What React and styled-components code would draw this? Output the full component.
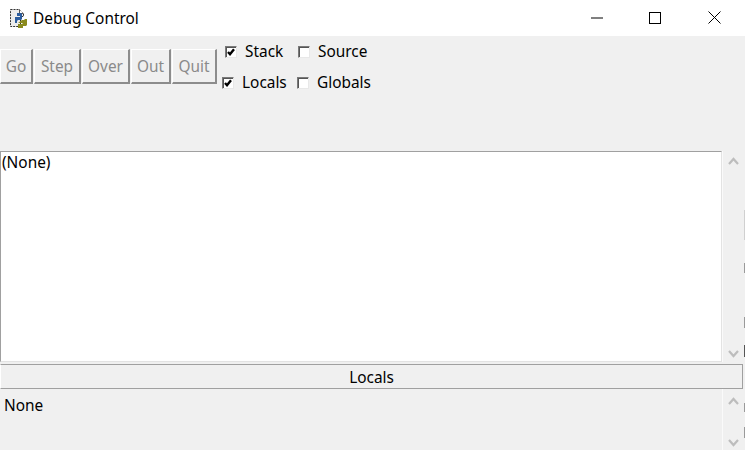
import React from "react";
import styled, { createGlobalStyle } from "styled-components";

const GlobalStyle = createGlobalStyle`
  html, body {
    margin: 0;
    padding: 0;
    background: #f0f0f0;
  }
  * {
    box-sizing: border-box;
  }
`;

const Window = styled.div`
  position: relative;
  width: 745px;
  height: 450px;
  overflow: hidden;
  display: flex;
  flex-direction: column;
  background: #f0f0f0;
  color: #000;
  font-family: "Noto Sans", "Open Sans", sans-serif;
  font-size: 15.4px;
`;

const TitleBar = styled.div`
  height: 36px;
  flex: none;
  display: flex;
  align-items: center;
  background: #fff;
  padding: 0 1px 0 9px;
`;

const TitleText = styled.span`
  margin-left: 5px;
  flex: 1;
`;

const WindowButton = styled.div`
  width: ${(p) => p.$w}px;
  height: 36px;
  margin-top: -1px;
  display: flex;
  align-items: center;
  justify-content: center;
  & svg {
    display: block;
  }
`;

const Controls = styled.div`
  height: 115px;
  flex: none;
  display: flex;
  align-items: flex-start;
`;

const ButtonRow = styled.div`
  display: flex;
  gap: 1px;
  margin-top: 13px;
`;

const TkButton = styled.button`
  width: ${(p) => p.$w}px;
  height: 35px;
  padding: 1px 0 0;
  margin: 0;
  background: #f0f0f0;
  color: #8a8a8a;
  font: inherit;
  border: 1px solid #fff;
  border-right: 2px solid #8c8c8c;
  border-bottom: 2px solid #8c8c8c;
`;

const Checks = styled.div`
  display: flex;
  flex-direction: column;
`;

const CheckRow = styled.div`
  height: 31px;
  display: flex;
  align-items: center;
  padding-left: ${(p) => p.$indent}px;
`;

const Check = styled.label`
  width: ${(p) => p.$w}px;
  display: flex;
  align-items: center;
  gap: 8px;
  white-space: nowrap;
  line-height: 20px;
`;

const Box = styled.span`
  width: 12px;
  height: 12px;
  flex: none;
  background: #fff;
  border: 1px solid;
  border-color: #7a7a7a #e8e8e8 #e8e8e8 #7a7a7a;
  box-shadow: inset 1px 1px 0 #555;
  display: flex;
  align-items: center;
  justify-content: center;
`;

const Pane = styled.div`
  flex: none;
  height: ${(p) => p.$h}px;
  display: flex;
`;

const TextArea = styled.div`
  width: 722px;
  flex: none;
  padding: 1px 1px 0;
  line-height: 20px;
  background: #fff;
  border-top: 1px solid #a0a0a0;
  border-left: 1px solid #a0a0a0;
  border-right: 1px solid #e3e3e3;
  border-bottom: 1px solid #e3e3e3;
`;

const PlainText = styled.div`
  width: 722px;
  flex: none;
  padding: 7px 4px;
  line-height: 20px;
`;

const ScrollBar = styled.div`
  width: 23px;
  flex: none;
  display: flex;
  flex-direction: column;
  justify-content: space-between;
  align-items: flex-start;
  padding: ${(p) => p.$pad};
  border-left: 1px solid #fafafa;
`;

const Arrow = styled.svg`
  display: block;
  margin-left: 5px;
`;

const Gap = styled.div`
  height: 2px;
  flex: none;
`;

const LocalsBar = styled.div`
  height: 25px;
  width: 743px;
  flex: none;
  display: flex;
  align-items: center;
  justify-content: center;
  padding-top: 2px;
  border: 1px solid #a0a0a0;
  border-left-color: #fff;
  line-height: 20px;
`;

/* bits of whatever sits behind the window, showing down its right edge */
const EdgeMark = styled.div`
  position: absolute;
  right: 0;
  width: 1px;
  top: ${(p) => p.$top}px;
  height: ${(p) => p.$h}px;
  background: ${(p) => p.$c};
`;

const edgeMarks = [
  [210, 30, "#d0d0d0"],
  [263, 10, "#9a9a9a"],
  [317, 11, "#9a9a9a"],
  [345, 12, "#555"],
  [403, 9, "#9a9a9a"],
  [427, 11, "#9a9a9a"],
];

const PythonIcon = () => (
  <svg width="19" height="20" viewBox="0 0 19 20">
    <path d="M1.5 1.5h9l4 4v3h-3v10h-10z" fill="#ececec" stroke="#333" strokeDasharray="2 1" />
    <path d="M10.5 1.5v4h4" fill="#fff" stroke="#555" />
    <path d="M6 12V9h5V8H8V5h4l1 1v5l-1 1H9l-1 1v2H6z" fill="#2b5c9e" />
    <path d="M18 11v6l-1 1h-3v2h-5v-4h5l-1-1H9l4-3h2l1-1z" fill="#8a8a1e" />
  </svg>
);

const Chevron = ({ up }) => (
  <Arrow width="11" height="8" viewBox="0 0 11 8">
    <path
      d={up ? "M1 7L5.5 2L10 7" : "M1 1L5.5 6L10 1"}
      fill="none"
      stroke="#bdbdbd"
      strokeWidth="2.2"
    />
  </Arrow>
);

const CheckItem = ({ label, checked, w }) => (
  <Check $w={w}>
    <Box>
      {checked && (
        <svg width="8" height="8" viewBox="0 0 8 8">
          <path d="M1 4L3 6.2L7 1.2" fill="none" stroke="#000" strokeWidth="2.4" />
        </svg>
      )}
    </Box>
    {label}
  </Check>
);

const buttons = [
  ["Go", 33],
  ["Step", 47],
  ["Over", 48],
  ["Out", 40],
  ["Quit", 45],
];

export default function App() {
  return (
    <>
      <GlobalStyle />
      <Window>
        <TitleBar>
          <PythonIcon />
          <TitleText>Debug Control</TitleText>
          <WindowButton $w={58}>
            <svg width="12" height="2" viewBox="0 0 12 2">
              <path d="M0 1H12" stroke="#000" strokeWidth="1" />
            </svg>
          </WindowButton>
          <WindowButton $w={58}>
            <svg width="12" height="12" viewBox="0 0 12 12">
              <rect x="0.5" y="0.5" width="11" height="11" fill="none" stroke="#000" />
            </svg>
          </WindowButton>
          <WindowButton $w={60}>
            <svg width="13" height="13" viewBox="0 0 13 13">
              <path d="M0.5 0.5L12.5 12.5M12.5 0.5L0.5 12.5" stroke="#000" strokeWidth="1" />
            </svg>
          </WindowButton>
        </TitleBar>

        <Controls>
          <ButtonRow>
            {buttons.map(([label, w]) => (
              <TkButton key={label} $w={w}>
                {label}
              </TkButton>
            ))}
          </ButtonRow>
          <Checks>
            <CheckRow $indent={8}>
              <CheckItem label="Stack" checked w={73} />
              <CheckItem label="Source" w={80} />
            </CheckRow>
            <CheckRow $indent={5}>
              <CheckItem label="Locals" checked w={75} />
              <CheckItem label="Globals" w={80} />
            </CheckRow>
          </Checks>
        </Controls>

        <Pane $h={211}>
          <TextArea>(None)</TextArea>
          <ScrollBar $pad="6px 0 4px">
            <Chevron up />
            <Chevron />
          </ScrollBar>
        </Pane>
        <Gap />
        <LocalsBar>Locals</LocalsBar>
        <Pane $h={62}>
          <PlainText>None</PlainText>
          <ScrollBar $pad="8px 0 4px">
            <Chevron up />
            <Chevron />
          </ScrollBar>
        </Pane>

        {edgeMarks.map(([top, h, c]) => (
          <EdgeMark key={top} $top={top} $h={h} $c={c} />
        ))}
      </Window>
    </>
  );
}
